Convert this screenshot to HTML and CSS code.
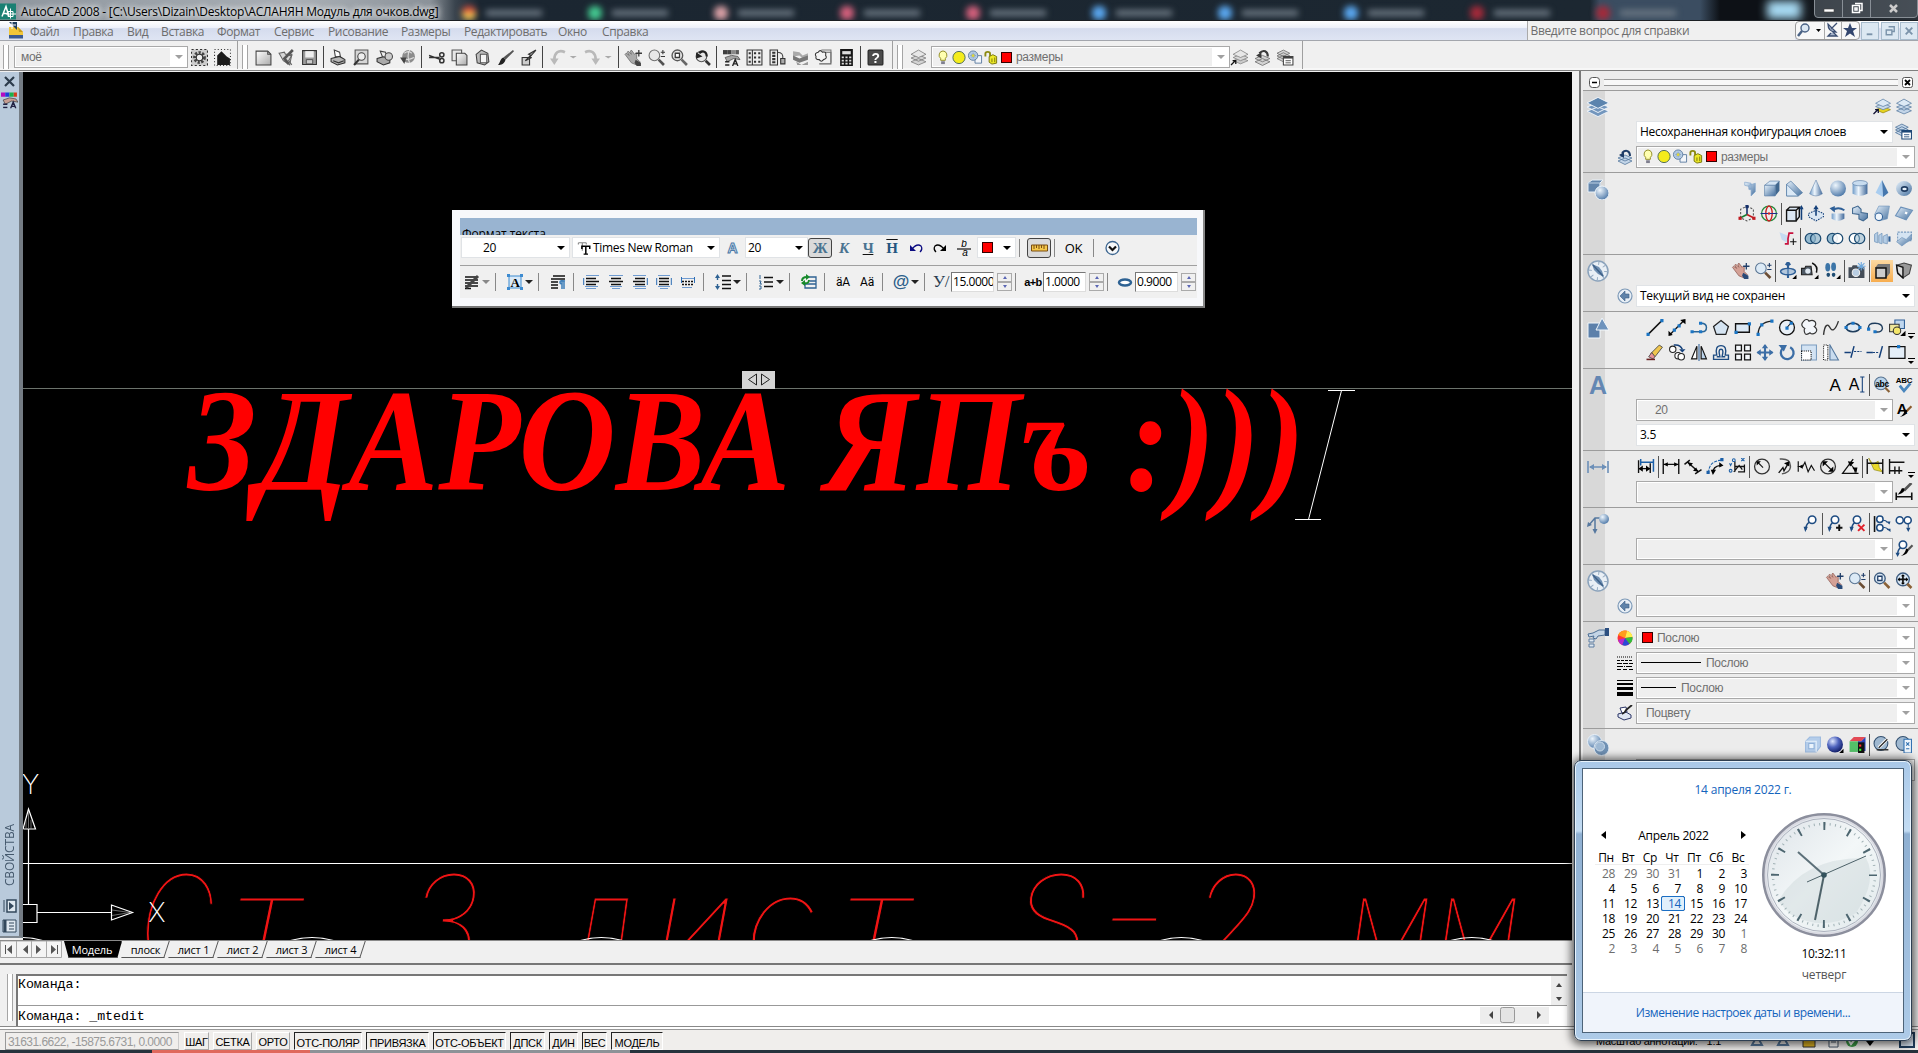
FILE: index.html
```html
<!DOCTYPE html>
<html lang="ru">
<head>
  <meta charset="UTF-8" />
  <title>AutoCAD 2008 - [C:\Users\Dizain\Desktop\АСЛАНЯН Модуль для очков.dwg]</title>
  <link rel="stylesheet" href="styles.css">
</head>
<body>
  <!-- Icon sprite -->
  <svg class="sprite" width="0" height="0">
    <defs>
      <linearGradient id="gBlue" x1="0" y1="0" x2="1" y2="1"><stop offset="0" stop-color="#e6f1fb"/><stop offset="1" stop-color="#46719f"/></linearGradient>
      <linearGradient id="gCyl" x1="0" y1="0" x2="1" y2="0"><stop offset="0" stop-color="#6f9bc8"/><stop offset=".4" stop-color="#eef6fd"/><stop offset="1" stop-color="#41699a"/></linearGradient>
      <linearGradient id="gGray" x1="0" y1="0" x2="1" y2="1"><stop offset="0" stop-color="#fff"/><stop offset="1" stop-color="#aaa"/></linearGradient>
      <radialGradient id="gBall" cx=".35" cy=".3" r=".75"><stop offset="0" stop-color="#eef6fd"/><stop offset="1" stop-color="#4d78a8"/></radialGradient>
      <radialGradient id="gBallDark" cx=".35" cy=".3" r=".75"><stop offset="0" stop-color="#dfe8ff"/><stop offset=".5" stop-color="#4e63bd"/><stop offset="1" stop-color="#101c66"/></radialGradient>
    </defs>
    <symbol id="layers" viewBox="0 0 16 16"><path d="M0 11l8-3 8 3-8 4zM0 8l8-3 8 3-8 4z" fill="#7396bd" stroke="#eef4fa" stroke-width=".7"/><path d="M0 5l8-4 8 4-8 4z" fill="#5c84ae" stroke="#eef4fa" stroke-width=".7"/></symbol>
    <symbol id="layers-cur" viewBox="0 0 16 16"><path d="M2 11l7-3 7 3-7 3z" fill="#e6d320" stroke="#8a7a10" stroke-width=".6"/><path d="M2 8l7-3 7 3-7 3z" fill="#c9d9ea" stroke="#5c80a6" stroke-width=".7"/><path d="M2 5l7-4 7 4-7 3z" fill="#dce9f5" stroke="#5c80a6" stroke-width=".7"/><path d="M0 15l4-4M1.500 11h3v3" fill="none" stroke="#113" stroke-width="1.200"/></symbol>
    <symbol id="layers-lt" viewBox="0 0 16 16"><path d="M1 12l7-3 7 3-7 3zM1 8.500l7-3 7 3-7 3z" fill="#c3d5e8" stroke="#55789e" stroke-width=".7"/><path d="M1 5l7-4 7 4-7 3z" fill="#dce9f5" stroke="#55789e" stroke-width=".7"/></symbol>
    <symbol id="layers-prev" viewBox="0 0 16 16"><path d="M1 12l7-3 7 3-7 3.500zM1 9l7-3 7 3-7 3z" fill="#c3d5e8" stroke="#55789e" stroke-width=".8"/><path d="M13 7c0-5-4-7-8-3" fill="none" stroke="#1f3d68" stroke-width="2"/><path d="M2 6l5 3 0-6z" fill="#1f3d68"/></symbol>
    <symbol id="layers-win" viewBox="0 0 16 16"><path d="M0 9l6-3 6 3-6 3zM0 6.500l6-3 6 3-6 3zM0 4l6-3 6 3-6 3z" fill="#c3d5e8" stroke="#55789e" stroke-width=".8"/><path d="M6 7h9v8H6z" fill="#fff" stroke="#1d4776"/><path d="M6 7h9v2H6z" fill="#1d4776"/><path d="M8 11h5M8 13h5" stroke="#1d4776" stroke-width=".8"/></symbol>
    <symbol id="bulb" viewBox="0 0 16 16"><path d="M8 1a4.500 4.500 0 0 1 2.500 8v2h-5V9A4.500 4.500 0 0 1 8 1z" fill="#ffffb0" stroke="#8f8b1f"/><path d="M6 12h4v3H6z" fill="#7f7f8f"/></symbol>
    <symbol id="sun" viewBox="0 0 16 16"><circle cx="8" cy="8" r="6.500" fill="#f4ec1c" stroke="#4b6a55"/></symbol>
    <symbol id="freeze" viewBox="0 0 16 16"><path d="M8 6h7v8H8z" fill="#f3f6fa" stroke="#5f7ea2"/><circle cx="6" cy="6" r="5" fill="#b5cce4" stroke="#5f7ea2"/><path d="M6 3v6M3 6h6M4 4l4 4M8 4l-4 4" stroke="#7793b4" stroke-width=".8"/><circle cx="6" cy="6" r="1.500" fill="#ded63a"/></symbol>
    <symbol id="lock" viewBox="0 0 16 16"><path d="M2 7V4q0-2 2.500-2T7 4v4" fill="none" stroke="#8c8a10" stroke-width="2"/><path d="M6 7l4-2 4 2v7l-5 1-3-2z" fill="#eeea28" stroke="#76740c"/><path d="M9 9v4M12 8v5" stroke="#76740c"/></symbol>
    <symbol id="gear" viewBox="0 0 16 16"><path d="M.5.500h15v15H.5z" fill="#ccc" stroke="#333" stroke-dasharray="2 2"/><circle cx="8" cy="8" r="4.500" fill="none" stroke="#444" stroke-width="3" stroke-dasharray="2 1.300"/><circle cx="8" cy="8" r="3" fill="#eee" stroke="#333"/></symbol>
    <symbol id="home" viewBox="0 0 16 16"><path d="M.5.500h15v15H.5z" fill="none" stroke="#333" stroke-dasharray="1 2"/><path d="M3 15V6l4-4 5 5 3 2v6z" fill="#1c1c1c"/></symbol>
    <symbol id="new" viewBox="0 0 16 16"><path d="M1 2h11l3 3v10H1z" fill="url(#gGray)" stroke="#444"/><path d="M12 2v3h3" fill="none" stroke="#444"/></symbol>
    <symbol id="open" viewBox="0 0 16 16"><path d="M1 4l5-1 1 2h6l-2 10-6-4z" fill="#d6d6d6" stroke="#666"/><path d="M14 1l-4 4-4 4 4 5" fill="none" stroke="#555" stroke-width="2.500"/><path d="M10 6l3 0-3 5 3 4" fill="none" stroke="#666"/></symbol>
    <symbol id="save" viewBox="0 0 16 16"><path d="M1.500 1.500h13v13h-13z" fill="#9b9b9b" stroke="#333"/><path d="M4 2h8v6H4z" fill="#eee"/><path d="M5 10h6v4H5z" fill="#ccc" stroke="#444" stroke-width=".8"/></symbol>
    <symbol id="print" viewBox="0 0 16 16"><path d="M4 1l5 2 1 5-5-1z" fill="#fff" stroke="#444"/><path d="M1 9l8-2 5 3v3l-7 2-6-3z" fill="#b5b5b5" stroke="#333"/><path d="M3 11l5 2 5-2" fill="none" stroke="#333"/></symbol>
    <symbol id="preview" viewBox="0 0 16 16"><path d="M2 1h12v13H2z" fill="#d6d6d6" stroke="#555"/><circle cx="8" cy="7" r="3.500" fill="#eee" stroke="#444"/><path d="M5.500 10L1 15" stroke="#333" stroke-width="2"/></symbol>
    <symbol id="publish" viewBox="0 0 16 16"><path d="M1 9l7-2 5 3v3l-6 2-6-3z" fill="#aaa" stroke="#333"/><path d="M4 2l5 1 1 5-4-1z" fill="#eee" stroke="#444"/><circle cx="12" cy="7" r="3.500" fill="#ccc" stroke="#444"/></symbol>
    <symbol id="globe" viewBox="0 0 16 16"><circle cx="9" cy="7" r="6" fill="#8c8c8c"/><path d="M5 4q4-3 7 0M4 9q5 2 10-1M10 1q-3 6 0 12" fill="none" stroke="#ddd"/><path d="M1 8l6 0-2 6z" fill="#444"/></symbol>
    <symbol id="cut" viewBox="0 0 16 16"><path d="M1 6l11 4M1 8h10" stroke="#333" stroke-width="1.400"/><circle cx="13" cy="5.500" r="2" fill="none" stroke="#333" stroke-width="1.400"/><circle cx="13" cy="11" r="2" fill="none" stroke="#333" stroke-width="1.400"/></symbol>
    <symbol id="copy" viewBox="0 0 16 16"><path d="M1 1h9v10H1z" fill="#e8e8e8" stroke="#555"/><path d="M5 4h8l2 2v9H5z" fill="url(#gGray)" stroke="#444"/></symbol>
    <symbol id="paste" viewBox="0 0 16 16"><path d="M2 5l5-4 6 3 1 8-4 3-7-2z" fill="#bdbdbd" stroke="#444"/><path d="M6 5h6v8H6z" fill="#f4f4f4" stroke="#555"/></symbol>
    <symbol id="brush" viewBox="0 0 16 16"><path d="M15 1l1 1-8 8-2-2z" fill="#555"/><path d="M6 8l2 2c-1 4-4 5-7 5 2-2 2-6 5-7z" fill="#222"/></symbol>
    <symbol id="blockedit" viewBox="0 0 16 16"><path d="M2 8h7v7H2z" fill="#ccc" stroke="#333"/><path d="M9 8L15 1l-7 4 2 1-5 5 6-3z" fill="#999" stroke="#333"/></symbol>
    <symbol id="undo" viewBox="0 0 16 16"><path d="M15 3C9 0 5 4 5 10" fill="none" stroke="currentColor" stroke-width="2.500"/><path d="M1 9h8l-4 6z" fill="currentColor"/></symbol>
    <symbol id="redo" viewBox="0 0 16 16"><path d="M1 3c6-3 10 1 10 7" fill="none" stroke="currentColor" stroke-width="2.500"/><path d="M7 9h8l-4 6z" fill="currentColor"/></symbol>
    <symbol id="pan" viewBox="0 0 16 16"><path d="M0 5l1-1 3 2-2-3 1-1 3 3-1-3 1-1 3 4 1-1 1 1v4l3 3-3 3-5-2z" fill="#d4a196" stroke="#8d5b52" stroke-width=".7"/><path d="M10 10l5 3v3h-4l-2-3z" fill="#284a78"/><path d="M13 1v6M10 4h6" stroke="#1f3d68" stroke-width="1.200"/></symbol>
    <symbol id="zoom" viewBox="0 0 16 16"><circle cx="6" cy="6" r="5" fill="#dceaf6" stroke="#5a7593"/><path d="M10 10l5 5" stroke="#6b4d34" stroke-width="2.500"/><path d="M14 1v4M12 3h4M12 7h4" stroke="#1f3d68"/></symbol>
    <symbol id="zoomwin" viewBox="0 0 16 16"><circle cx="6" cy="6" r="5" fill="#dceaf6" stroke="#3f5d80" stroke-width="1.300"/><path d="M10 10l5 5" stroke="#8a6136" stroke-width="2.500"/><path d="M4 4h4v4H4z" fill="#fff" stroke="#1f3d68" stroke-width="1.200"/></symbol>
    <symbol id="zoomext" viewBox="0 0 16 16"><circle cx="7" cy="7" r="6" fill="#dceaf6" stroke="#3f5d80" stroke-width="1.300"/><path d="M11 11l4 4" stroke="#8a6136" stroke-width="2.500"/><path d="M7 3v8M3 7h8" stroke="#111" stroke-width="1.600"/><path d="M7 2l2 2H5zM7 12l2-2H5zM2 7l2-2v4zM12 7l-2-2v4z"/></symbol>
    <symbol id="zoomprev" viewBox="0 0 16 16"><circle cx="7" cy="7" r="5" fill="#e6e6e6" stroke="#555"/><path d="M11 11l4 4" stroke="#333" stroke-width="2.500"/><path d="M12 7c0-5-4-6-7-3" fill="none" stroke="#222" stroke-width="2"/><path d="M2 3v6l6-2z" fill="#222"/></symbol>
    <symbol id="props" viewBox="0 0 16 16"><path d="M0 1h4v4H0z" fill="#b40cc0"/><path d="M4 1h4v4H4z" fill="#1d3dd8"/><path d="M8 1h4v4H8z" fill="#1bb04a"/><path d="M12 1h3v4h-3z" fill="#d43c18"/><path d="M2 8l6-2 6 1 2 3-6-1-6 3z" fill="#c79d92" stroke="#444" stroke-width=".7"/><path d="M2 12h4M2 15h4M9 16l2.500-6 2.500 6M10 14h3" fill="none" stroke="#224" stroke-width="1.300"/></symbol>
    <symbol id="dcenter" viewBox="0 0 16 16"><path d="M1 1h14v14H1z" fill="#eee" stroke="#333"/><path d="M6 1v14" stroke="#333"/><path d="M3.500 3v11M8.500 3v11M12.500 3v11" stroke="#333" stroke-width="2" stroke-dasharray="2 2"/></symbol>
    <symbol id="palette" viewBox="0 0 16 16"><path d="M1 1h7v14H1z" fill="#eee" stroke="#333"/><path d="M3 3.500h3M3 6.500h3M3 9.500h3M3 12.500h3" stroke="#333" stroke-width="2"/><path d="M8 3q6 0 5 7" fill="none" stroke="#444"/><path d="M11 9h4v5h-4z" fill="#aaa" stroke="#333"/></symbol>
    <symbol id="sheets" viewBox="0 0 16 16"><path d="M1 2l6 1 3 3 5-2v4l-5 1-3-3-6 1z" fill="#aaa"/><path d="M1 6l6 3 8-3v4l-8 3-6-3z" fill="#777"/><path d="M4 12l5 3 6-3v3H5z" fill="#999"/></symbol>
    <symbol id="markup" viewBox="0 0 16 16"><path d="M4 3h11v11H4" fill="none" stroke="#666"/><path d="M6 1h9v12" fill="none" stroke="#777"/><path d="M3 3q2-3 4 0 4-1 3 3 2 3-2 4-2 3-4 0-4 0-3-3-2-3 2-4z" fill="#f3f3f3" stroke="#333"/></symbol>
    <symbol id="calc" viewBox="0 0 16 16"><path d="M2 0h12v16H2z" fill="#151515"/><path d="M4 2h8v3H4z" fill="#ddd"/><path d="M4.500 7v8M8 7v8M11.500 7v8" stroke="#ddd" stroke-width="2" stroke-dasharray="1.700 1.300"/></symbol>
    <symbol id="help" viewBox="0 0 16 16"><rect x="1" y="1" width="14" height="14" rx="1" fill="#4b4b4b" stroke="#222"/><text x="8" y="13" text-anchor="middle" font-family="Liberation Sans" font-weight="bold" font-size="13" fill="#fff">?</text></symbol>
    <symbol id="solids" viewBox="0 0 22 22"><path d="M1 5l4-3h11l-3 3v9H1z" fill="#6486ac" stroke="#e9f1f8"/><path d="M1 5h12v9" fill="none" stroke="#bcd0e4"/><circle cx="15" cy="15" r="7" fill="url(#gBall)" stroke="#f2f7fb"/></symbol>
    <symbol id="compass" viewBox="0 0 22 22"><circle cx="11" cy="11" r="10" fill="#e9eff5" stroke="#8aa2bb" stroke-width="1.500"/><circle cx="11" cy="11" r="7.500" fill="none" stroke="#98adc3" stroke-dasharray="1 4.900" stroke-width="3"/><path d="M5 4l7 3 3 4 2 6-6-3-4-4z" fill="#6f8fb2"/><path d="M6 5l10 11" stroke="#3f6188" stroke-width="1.500"/></symbol>
    <symbol id="shapes" viewBox="0 0 22 22"><path d="M1 6h12v15H1z" fill="#5c80aa" stroke="#f2f7fb"/><path d="M15 1l7 12H9z" fill="#6e93bd" stroke="#f2f7fb"/></symbol>
    <symbol id="bigdim" viewBox="0 0 22 22"><path d="M1 5v12M21 5v12M3 11h16" stroke="#6c8fb8" stroke-width="1.600"/><path d="M2 11l5-3v6zM20 11l-5-3v6z" fill="#6c8fb8"/></symbol>
    <symbol id="bigleader" viewBox="0 0 22 22"><path d="M2 12L8 5h6M8 5v14" fill="none" stroke="#56789f" stroke-width="1.500"/><path d="M0 14l1-5 4 3zM8 21l-2.500-5h5z" fill="#56789f"/><circle cx="17" cy="6" r="5" fill="url(#gBall)"/></symbol>
    <symbol id="bigprops" viewBox="0 0 22 22"><path d="M1 7l5-1 6-3h6v5l-7 1-2 3-3-1 1-2-5 1z" fill="#c3d4e5" stroke="#4d6f95"/><path d="M18 1h4v8h-4z" fill="#2c4f80"/><path d="M2 12h5v3H2zM2 17h5v3H2z" fill="#dfe8f1" stroke="#5d7da0"/></symbol>
    <symbol id="bigballs" viewBox="0 0 22 22"><circle cx="7.500" cy="7.500" r="7" fill="url(#gBall)" stroke="#e9f1f8"/><circle cx="14.500" cy="14" r="7.500" fill="#6f90b3" stroke="#dfeaf5"/><circle cx="13" cy="12.500" r="4.500" fill="#9db8d3" stroke="#c9daea"/></symbol>
    <symbol id="polysolid" viewBox="0 0 16 16"><path d="M3 2l6 1v6l-2 0v-3l-4-1zM7 5l6-2v8l-4 4V8l-2 0z" fill="url(#gBlue)" stroke="#7fa4cb" stroke-width=".6"/></symbol>
    <symbol id="box" viewBox="0 0 16 16"><path d="M1 5l5-4h9l-4 4z" fill="#d6e6f5" stroke="#587da6" stroke-width=".6"/><path d="M11 5l4-4v9l-4 5z" fill="#41688f"/><path d="M1 5h10v10H1z" fill="url(#gBlue)" stroke="#587da6" stroke-width=".6"/></symbol>
    <symbol id="wedge" viewBox="0 0 16 16"><path d="M1 4l4-3 11 11-4 3H1z" fill="url(#gBlue)" stroke="#587da6" stroke-width=".7"/><path d="M1 4l11 11H1z" fill="#dbe9f6" stroke="#587da6" stroke-width=".7"/></symbol>
    <symbol id="cone" viewBox="0 0 16 16"><path d="M8 0l6 13q-6 4-12 0z" fill="url(#gCyl)" stroke="#587da6" stroke-width=".5"/></symbol>
    <symbol id="ball" viewBox="0 0 16 16"><circle cx="8" cy="8" r="7.500" fill="url(#gBall)"/></symbol>
    <symbol id="cylinder" viewBox="0 0 16 16"><path d="M1 3v10q7 4 14 0V3z" fill="url(#gCyl)"/><ellipse cx="8" cy="3" rx="7" ry="2.500" fill="#c8dcef" stroke="#587da6" stroke-width=".6"/></symbol>
    <symbol id="pyramid" viewBox="0 0 16 16"><path d="M8 0L2 12l7 4z" fill="#a9cdf0"/><path d="M8 0l6 12-5 4z" fill="#4678ae"/></symbol>
    <symbol id="torus" viewBox="0 0 16 16"><ellipse cx="8" cy="8" rx="7.500" ry="7" fill="url(#gBlue)"/><ellipse cx="8.500" cy="8.500" rx="2.800" ry="2" fill="#e6f1fb" stroke="#1d3a5f" stroke-width="1.500"/></symbol>
    <symbol id="orbit3d" viewBox="0 0 16 16"><path d="M8 1l6 3v8l-6 3-6-3V4z" fill="none" stroke="#555" stroke-dasharray="2 1.500"/><path d="M8 9V2" stroke="#15306b" stroke-width="1.500"/><path d="M8 9l-6 3" stroke="#168035" stroke-width="1.500"/><path d="M8 9l6 3" stroke="#c01a20" stroke-width="1.500"/><path d="M6.500 0h3v3h-3z" fill="#15306b"/><path d="M0 11h3v3H0z" fill="#c01a20"/><path d="M13 11h3v3h-3z" fill="#c01a20"/></symbol>
    <symbol id="spherewire" viewBox="0 0 16 16"><circle cx="8" cy="8" r="7" fill="none" stroke="#248a3c" stroke-width="1.200"/><ellipse cx="8" cy="8" rx="3" ry="7" fill="none" stroke="#c22" stroke-width="1.300"/><path d="M0 8h16" stroke="#1c2e8a"/><path d="M7 7h2v2H7z" fill="#c22"/></symbol>
    <symbol id="extrude" viewBox="0 0 16 16"><path d="M1 5h9v10H1zM1 5l3-3h9l-3 3M13 2v9l-3 4" fill="#dbe7f3" stroke="#111" stroke-width="1.300"/><path d="M15 14V2" stroke="#15407a" stroke-width="1.500"/><path d="M15 0l-2 4h4z" fill="#15407a"/></symbol>
    <symbol id="presspull" viewBox="0 0 16 16"><path d="M1 8l7-3 7 3v3l-7 4-7-4z" fill="#dbe7f3" stroke="#15407a" stroke-dasharray="1.500 1"/><path d="M8 10V3" stroke="#15407a" stroke-width="1.500"/><path d="M8 0l2.500 4h-5z" fill="#15407a"/></symbol>
    <symbol id="revolve" viewBox="0 0 16 16"><path d="M2 8h12v5q-6 4-12 0z" fill="url(#gCyl)"/><path d="M3 5q5-4 11 0" fill="none" stroke="#2e5f97" stroke-width="1.800"/><path d="M0 3l5-2v6z" fill="#2e5f97"/></symbol>
    <symbol id="sweep" viewBox="0 0 16 16"><path d="M1 3l5-2 3 3v3l6 1v4l-4 3-4-2V9L1 8z" fill="url(#gBlue)" stroke="#41688f"/></symbol>
    <symbol id="loft" viewBox="0 0 16 16"><path d="M1 9L5 1h10l-2 12-8 2z" fill="url(#gBlue)" stroke="#6d92ba" stroke-width=".6"/><circle cx="5" cy="11" r="3.500" fill="#f0f6fc" stroke="#2e5f97"/></symbol>
    <symbol id="planar" viewBox="0 0 16 16"><path d="M5 2l11 3-6 9-10-4z" fill="url(#gBlue)" stroke="#6d92ba"/><path d="M9 7l2 1" stroke="#fff" stroke-width="2"/></symbol>
    <symbol id="section" viewBox="0 0 16 16"><path d="M0 2l7 3v7l-5-3z" fill="#c5dbf1"/><path d="M13 3H9L8 8v5H5" fill="none" stroke="#c8103c" stroke-width="1.600"/><path d="M13 8v6M10 11h6" stroke="#111"/></symbol>
    <symbol id="union" viewBox="0 0 16 16"><circle cx="5.500" cy="8" r="4.800" fill="#94bad0" stroke="#1e4c72" stroke-width="1.200"/><circle cx="10.500" cy="8" r="4.800" fill="#94bad0" fill-opacity=".7" stroke="#1e4c72" stroke-width="1.200"/></symbol>
    <symbol id="subtract" viewBox="0 0 16 16"><circle cx="5.500" cy="8" r="4.800" fill="#94bad0" stroke="#1e4c72" stroke-width="1.200"/><circle cx="10.500" cy="8" r="4.800" fill="#fff" fill-opacity=".9" stroke="#1e4c72" stroke-width="1.200"/></symbol>
    <symbol id="intersect" viewBox="0 0 16 16"><circle cx="5.500" cy="8" r="4.800" fill="#fff" stroke="#1e4c72" stroke-width="1.200"/><circle cx="10.500" cy="8" r="4.800" fill="#94bad0" fill-opacity=".5" stroke="#1e4c72" stroke-width="1.200"/></symbol>
    <symbol id="slice" viewBox="0 0 16 16"><path d="M1 4l3-2v10l-3-1zM5 5l3-2v10l-3-1zM9 6l4-2v9l-4-1z" fill="#b4cde5" stroke="#7a9cbf" stroke-width=".8"/><path d="M15 6v5" stroke="#2e5f97" stroke-width="2"/></symbol>
    <symbol id="convert" viewBox="0 0 16 16"><path d="M2 2h13v8H2z" fill="#d5e4f2" stroke="#7a9cbf" stroke-dasharray="2 1"/><path d="M1 11l5-4 4 2 5-5v5l-5 3-4 3z" fill="url(#gBlue)" stroke="#6d92ba" stroke-width=".6"/></symbol>
    <symbol id="orbit" viewBox="0 0 16 16"><path d="M8 1v14M6 3l2-3 2 3" stroke="#2e5f97" stroke-width="2" fill="none"/><ellipse cx="8" cy="9" rx="7" ry="3" fill="#8fb1d3" fill-opacity=".6" stroke="#2e5f97" stroke-width="1.400"/><path d="M16 12v4h-4z" fill="#000"/></symbol>
    <symbol id="swivel" viewBox="0 0 16 16"><path d="M0 6h3l1-2h5l1 8H0z" fill="#4f5a66" stroke="#222"/><circle cx="6" cy="8.500" r="2.500" fill="#dfe8f1"/><path d="M10 1q6 3 4 9" fill="none" stroke="#111" stroke-width="1.500"/><path d="M16 12v4h-4z" fill="#000"/></symbol>
    <symbol id="walk" viewBox="0 0 16 16"><ellipse cx="4" cy="5" rx="2.300" ry="4" fill="#3c75a8"/><ellipse cx="9.500" cy="4.500" rx="2.300" ry="4" fill="#3c75a8"/><ellipse cx="4.500" cy="12" rx="1.700" ry="2" fill="#1e4c72"/><ellipse cx="9.500" cy="12" rx="1.700" ry="2" fill="#1e4c72"/><path d="M16 12v4h-4z" fill="#000"/></symbol>
    <symbol id="camera" viewBox="0 0 16 16"><path d="M0 5h3l1-2h4l1 2h6v10H0z" fill="#444d58"/><circle cx="7" cy="10" r="3.500" fill="#b8cde2" stroke="#eee"/><path d="M12 0v8M8 4h8M9 1l6 6M15 1L9 7" stroke="#6da8dd"/></symbol>
    <symbol id="parallel" viewBox="0 0 16 16"><path d="M4 1h12v9l-4 5V5H1z" fill="#777"/><path d="M2 5h10v10H2z" fill="#ccc" stroke="#111" stroke-width="1.500"/></symbol>
    <symbol id="persp" viewBox="0 0 16 16"><path d="M1 3l7-2 7 2-2 8-6 4-5-4z" fill="#999" stroke="#444"/><path d="M1 3l6 2v10l-5-5z" fill="#ddd" stroke="#111" stroke-width="1.300"/></symbol>
    <symbol id="back" viewBox="0 0 16 16"><circle cx="8" cy="8" r="7" fill="#e8eff6" stroke="#7e9ab8" stroke-width="1.200"/><path d="M3 8l5-5v3h4v4H8v3z" fill="#5f83aa" stroke="#3d6088" stroke-width=".6"/></symbol>
    <symbol id="line" viewBox="0 0 16 16"><path d="M2 14L14 2" stroke="#111" stroke-width="1.400"/><path d="M0 13h3v3H0zM13 0h3v3h-3z" fill="#1b75c4"/></symbol>
    <symbol id="xline" viewBox="0 0 16 16"><path d="M1 15L15 1" stroke="#111" stroke-width="1.300"/><path d="M16 0v5l-5-4zM0 16v-5l4 4z"/><path d="M4 9h3v3H4zM8.500 5h3v3h-3z" fill="#1b75c4"/></symbol>
    <symbol id="pline" viewBox="0 0 16 16"><path d="M2 12h9q4 0 4-4t-5-4" fill="none" stroke="#2b6799" stroke-width="1.400"/><path d="M0 10.500h3v3H0zM8 10.500h3v3H8zM8 2.500h3v3H8z" fill="#1b75c4"/></symbol>
    <symbol id="polygon" viewBox="0 0 16 16"><path d="M8 1.500l7 5.500-2.500 7.500h-9L1 7z" fill="#d5e4f2" stroke="#222" stroke-width="1.200"/></symbol>
    <symbol id="rect" viewBox="0 0 16 16"><path d="M1 4.500h13v8H1z" fill="#dce9f5" stroke="#111" stroke-width="1.300"/><path d="M0 11h3v3H0zM12.500 3h3v3h-3z" fill="#1b75c4"/></symbol>
    <symbol id="arc" viewBox="0 0 16 16"><path d="M1.500 14Q2 3 14 2" fill="none" stroke="#222" stroke-width="1.300"/><path d="M0 13h3v3H0zM3.500 4h3v3h-3zM13 .5h3v3h-3z" fill="#1b75c4"/></symbol>
    <symbol id="circle" viewBox="0 0 16 16"><circle cx="8" cy="8" r="7" fill="#e9f0f7" stroke="#111" stroke-width="1.200"/><path d="M8 8l3.500-4" stroke="#111"/><path d="M6.500 7h3v3h-3zM10.500 2.500h3v3h-3z" fill="#1b75c4"/></symbol>
    <symbol id="cloud" viewBox="0 0 16 16"><path d="M3 2q3-3 5 0 4-2 6 1 1 3-1 4 4 3 1 6-3 2-5 0-4 3-5 0-1-3 0-4-5-3-1-7z" fill="#f3f6fa" stroke="#333" stroke-width="1.100"/></symbol>
    <symbol id="spline" viewBox="0 0 16 16"><path d="M1 15C2 5 5 4 7 8s5 3 8-6" fill="none" stroke="#333" stroke-width="1.300"/></symbol>
    <symbol id="ellipse" viewBox="0 0 16 16"><ellipse cx="8" cy="8" rx="6.500" ry="4" fill="#dfeaf4" stroke="#1f3d5c" stroke-width="1.400"/><path d="M0 6.500h3v3H0zM13 6.500h3v3h-3zM6.500 2.500h3v3h-3z" fill="#1b75c4"/></symbol>
    <symbol id="earc" viewBox="0 0 16 16"><path d="M2 9Q1 4 8 4t7 5q-1 4-7 3" fill="none" stroke="#1f3d5c" stroke-width="1.300"/><path d="M.5 8h3v3h-3zM6.500 10.500h3v3h-3z" fill="#1b75c4"/></symbol>
    <symbol id="insblock" viewBox="0 0 16 16"><path d="M6 1h9v8H6z" fill="#bed6ee" stroke="#2e5f97"/><path d="M1 5h9v7H1z" fill="#eee79a" stroke="#333"/><circle cx="8" cy="11" r="3.500" fill="#f4e66a" stroke="#333"/><path d="M16 11v5h-5z" fill="#000"/></symbol>
    <symbol id="erase" viewBox="0 0 16 16"><path d="M4 9l8-8 3 2-7 9z" fill="#f0c64e" stroke="#444" stroke-width=".8"/><path d="M2 12l3-4 3 4-2 2z" fill="#e8929a" stroke="#444" stroke-width=".8"/><path d="M0 14.500h8" stroke="#6b2020" stroke-width="1.500"/></symbol>
    <symbol id="copyobj" viewBox="0 0 16 16"><circle cx="4" cy="5" r="3" fill="#fff" stroke="#222"/><circle cx="9" cy="11" r="3" fill="#fff" stroke="#222"/><circle cx="12" cy="12" r="3" fill="#fff" stroke="#222"/><path d="M5 1q6-1 8 4" fill="none" stroke="#15407a" stroke-width="1.400"/><path d="M10 5h6l-3 3z" fill="#15407a"/></symbol>
    <symbol id="mirror" viewBox="0 0 16 16"><path d="M6 2v12H1z" fill="#fff" stroke="#111" stroke-width="1.100"/><path d="M10 2v12h5z" fill="#bcd3ea" stroke="#111" stroke-width="1.100"/><path d="M8 0v16" stroke="#2e5f97"/></symbol>
    <symbol id="offset" viewBox="0 0 16 16"><path d="M1 14.500v-4h3q-2-9 4-9t4 9h3v4zM4 12h3q-2-7 1-7t1 7h3" fill="none" stroke="#1e4c82" stroke-width="1.300"/></symbol>
    <symbol id="array" viewBox="0 0 16 16"><path d="M1 1h5.500v5.500H1zM9.500 1H15v5.500H9.500zM1 9.500h5.500V15H1zM9.500 9.500H15V15H9.500z" fill="#f4f7fa" stroke="#111" stroke-width="1.200"/></symbol>
    <symbol id="move" viewBox="0 0 16 16"><path d="M8 1v14M1 8h14" stroke="#3c6ea6" stroke-width="2"/><path d="M8 0l3 4H5zM8 16l3-4H5zM0 8l4-3v6zM16 8l-4-3v6z" fill="#3c6ea6"/></symbol>
    <symbol id="rotate" viewBox="0 0 16 16"><path d="M4 4a6 6 0 1 0 7-1" fill="none" stroke="#3c6ea6" stroke-width="2.200"/><path d="M0 1h8L5 7z" fill="#3c6ea6"/></symbol>
    <symbol id="scale" viewBox="0 0 16 16"><path d="M1 1h14v14H1z" fill="#d3e3f3" stroke="#7a9cbf"/><path d="M1 6.500h9V15H1z" fill="#fff" stroke="#111" stroke-dasharray="1 1"/></symbol>
    <symbol id="stretch" viewBox="0 0 16 16"><path d="M1 1h4v14H1z" fill="#fff" stroke="#111" stroke-dasharray="1 1"/><path d="M7 1l8 14H7z" fill="#c9dcef" stroke="#55789e"/></symbol>
    <symbol id="trim" viewBox="0 0 16 16"><path d="M0 8h6M6 13l3-11" stroke="#15407a" stroke-width="1.400"/><path d="M9 7h7" stroke="#15407a" stroke-dasharray="2 1"/></symbol>
    <symbol id="extend" viewBox="0 0 16 16"><path d="M0 8h6M12 13l3-11" stroke="#15407a" stroke-width="1.400"/><path d="M6 8h6" stroke="#15407a" stroke-dasharray="2 1"/></symbol>
    <symbol id="break" viewBox="0 0 16 16"><path d="M.5 2.500h15v11H.5z" fill="#e4eef8" stroke="#111" stroke-width="1.200"/><path d="M8 1h3v3H8z" fill="#1b75c4"/></symbol>
    <symbol id="textA" viewBox="0 0 16 16"><text x="8" y="14" text-anchor="middle" font-family="Liberation Sans" font-size="16">A</text></symbol>
    <symbol id="mtext" viewBox="0 0 16 16"><text x="5" y="13" text-anchor="middle" font-family="Liberation Sans" font-size="15">A</text><path d="M11 1h4M13 1v14M11 15h4" stroke="#15407a"/></symbol>
    <symbol id="find" viewBox="0 0 16 16"><circle cx="7" cy="7" r="6" fill="#b9d3ea" stroke="#5a7593"/><path d="M11 11l4 4" stroke="#8a6136" stroke-width="2"/><text x="8" y="10" text-anchor="middle" font-family="Liberation Sans" font-weight="bold" font-size="8">abc</text></symbol>
    <symbol id="spell" viewBox="0 0 16 16"><text x="8" y="7" text-anchor="middle" font-family="Liberation Sans" font-weight="bold" font-size="7.500">ABC</text><path d="M4 9l4 5 6-7" fill="none" stroke="#4a87bd" stroke-width="2.600"/></symbol>
    <symbol id="style" viewBox="0 0 16 16"><text x="6" y="12" text-anchor="middle" font-family="Liberation Sans" font-weight="bold" font-size="14">A</text><path d="M15 5l-5 5" stroke="#8a5a2b" stroke-width="2"/><path d="M11 9q0 5-7 6 4-2 5-7z"/></symbol>
    <symbol id="qdim" viewBox="0 0 16 16"><path d="M1 2v12M12 5v9M1 10h11" stroke="#111" stroke-width="1.300"/><path d="M3 1v6M15 1v12M3 4h12" fill="none" stroke="#1b5fa8" stroke-width="1.400"/><path d="M1 10l4-3v6zM12 10l-4-3v6z"/></symbol>
    <symbol id="dimlin" viewBox="0 0 16 16"><path d="M.7 1v14M15.300 1v14M1 6h14" stroke="#111" stroke-width="1.300"/><path d="M1 6l4-2v4zM15 6l-4-2v4z"/></symbol>
    <symbol id="dimal" viewBox="0 0 16 16"><path d="M0 6l5-4M10 15l6-4M3 4l10 9" stroke="#111" stroke-width="1.400"/><path d="M3 4l5 1-3 3zM13 13l-5-1 3-3z"/></symbol>
    <symbol id="dimarc" viewBox="0 0 16 16"><path d="M2 14Q2 3 14 2" fill="none" stroke="#1b5fa8" stroke-dasharray="3 1"/><path d="M6 14q0-6 7-7" fill="none" stroke="#111" stroke-width="1.300"/><path d="M16 7l-4-3v5zM6 16l-2-5h5z"/><path d="M13 0h3v3h-3zM0 12h3v3H0z" fill="#1b5fa8"/></symbol>
    <symbol id="dimord" viewBox="0 0 16 16"><path d="M6 3v10M6 8h9M9 13h6V6M5 13l5-6 3 4" fill="none" stroke="#111" stroke-width="1.200"/><circle cx="5" cy="2" r="1.300" fill="none" stroke="#1b5fa8"/><circle cx="2" cy="12" r="1.300" fill="none" stroke="#1b5fa8"/><path d="M12 0l3 3M15 0l-3 3M1 5l1 2 1-2" fill="none" stroke="#1b5fa8"/></symbol>
    <symbol id="dimrad" viewBox="0 0 16 16"><circle cx="8" cy="8" r="7" fill="none" stroke="#333" stroke-width="1.200"/><path d="M9 9L4 4" stroke="#111"/><path d="M3 3h4L3 7z"/></symbol>
    <symbol id="dimjog" viewBox="0 0 16 16"><path d="M4 1q11-1 10 8-1 5-8 6" fill="none" stroke="#555" stroke-width="1.300"/><path d="M3 14l4-5 1 3 4-7" fill="none" stroke="#111" stroke-width="1.300"/><path d="M13 3v5L8 5z"/></symbol>
    <symbol id="dimjogl" viewBox="0 0 16 16"><path d="M.7 3v10M0 8h5l2-4 3 9 3-6 3 5" fill="none" stroke="#111" stroke-width="1.100"/><path d="M1 8l4-2v4z"/></symbol>
    <symbol id="dimdia" viewBox="0 0 16 16"><circle cx="8" cy="8" r="7" fill="none" stroke="#333" stroke-width="1.200"/><path d="M4 4l8 8" stroke="#111"/><path d="M3 3h5L3 8zM13 13H8l5-5z"/></symbol>
    <symbol id="dimang" viewBox="0 0 16 16"><path d="M16 14.500H1L11 1" fill="none" stroke="#111" stroke-width="1.200"/><path d="M8 6q4 2 5 8" fill="none" stroke="#111"/><path d="M6 3l6 1-4 4zM10 9h5l-1 5z"/></symbol>
    <symbol id="qdim2" viewBox="0 0 16 16"><path d="M2 0l4 6 5-3 1 6 3 4-8-2z" fill="#e9d92a" stroke="#8c8412" stroke-width=".6"/><path d="M.7 1v14M15.300 1v14M1 5h14" stroke="#111" stroke-width="1.300"/></symbol>
    <symbol id="dimcont" viewBox="0 0 16 16"><path d="M1 1v14M1 4h14M6 8v7M1 12h12M10 8v7" stroke="#111" stroke-width="1.300"/></symbol>
    <symbol id="dimstyle" viewBox="0 0 16 16"><path d="M.7 9v7M15.300 9v7M1 13h14" stroke="#111" stroke-width="1.500"/><path d="M15 0L8 7" stroke="#555" stroke-width="2.500"/><path d="M8 5q2 4-6 6 3-3 4-6z"/></symbol>
    <symbol id="leader" viewBox="0 0 16 16"><circle cx="10" cy="4.500" r="3.500" fill="#fff" stroke="#1e4c82" stroke-width="1.500"/><path d="M7 7q-3 2-3 7" fill="none" stroke="#1e4c82" stroke-width="1.400"/><path d="M3.500 16L2 11h4z" fill="#1e4c82"/></symbol>
    <symbol id="leadadd" viewBox="0 0 16 16"><circle cx="8" cy="4.500" r="3.500" fill="#fff" stroke="#1e4c82" stroke-width="1.500"/><path d="M6 7q-3 2-3 7" fill="none" stroke="#1e4c82" stroke-width="1.400"/><path d="M2.500 16L1 11h4z" fill="#1e4c82"/><path d="M12 9v6M9 12h6" stroke="#111" stroke-width="1.800"/></symbol>
    <symbol id="leaddel" viewBox="0 0 16 16"><circle cx="8" cy="4.500" r="3.500" fill="#fff" stroke="#1e4c82" stroke-width="1.500"/><path d="M6 7q-3 2-3 7" fill="none" stroke="#1e4c82" stroke-width="1.400"/><path d="M2.500 16L1 11h4z" fill="#1e4c82"/><path d="M9 9l6 6M15 9l-6 6" stroke="#e0202a" stroke-width="1.800"/></symbol>
    <symbol id="leadalign" viewBox="0 0 16 16"><path d="M1 1v15" stroke="#111" stroke-width="1.500"/><circle cx="6" cy="4" r="3" fill="#fff" stroke="#1e4c82" stroke-width="1.400"/><circle cx="6" cy="12" r="3" fill="#fff" stroke="#1e4c82" stroke-width="1.400"/><path d="M9 5q3 0 4 2M9 12q3-1 5 2" fill="none" stroke="#1e4c82"/><path d="M12 6l4 0-1 3zM12 13h4v3z" fill="#1e4c82"/></symbol>
    <symbol id="leadcol" viewBox="0 0 16 16"><circle cx="4" cy="5" r="3.300" fill="#fff" stroke="#1e4c82" stroke-width="1.500"/><circle cx="11.500" cy="5" r="3.300" fill="#fff" stroke="#1e4c82" stroke-width="1.500"/><path d="M12 8v4" stroke="#1e4c82"/><path d="M12 16l-2-4h4z" fill="#1e4c82"/></symbol>
    <symbol id="leadstyle" viewBox="0 0 16 16"><circle cx="7" cy="4.500" r="3.500" fill="#fff" stroke="#1e4c82" stroke-width="1.500"/><path d="M5 7q-3 2-3 7" fill="none" stroke="#1e4c82" stroke-width="1.400"/><path d="M2 16l-2-4h4z" fill="#1e4c82"/><path d="M16 5l-5 5" stroke="#555" stroke-width="2"/><path d="M12 9q0 5-7 6 4-2 5-7z"/></symbol>
    <symbol id="wheel" viewBox="0 0 16 16"><circle cx="8" cy="8" r="7.500" fill="#f33"/><path d="M8 8L1 5A7.500 7.500 0 0 1 10 .7z" fill="#ff9d1c"/><path d="M8 8l2-7.300a7.500 7.500 0 0 1 5.500 6.300z" fill="#fff04a"/><path d="M8 8l7.500-1a7.500 7.500 0 0 1-3 7z" fill="#2fbf3b"/><path d="M8 8l4.500 6A7.500 7.500 0 0 1 5 15z" fill="#2a49d8"/><path d="M8 8l-3 7a7.500 7.500 0 0 1-4-5z" fill="#b42bd0"/></symbol>
    <symbol id="ltype" viewBox="0 0 16 16"><path d="M0 2h16" stroke="#000" stroke-dasharray="1 1" stroke-width="1.200"/><path d="M0 5.500h16" stroke="#000" stroke-dasharray="3 1"/><path d="M0 8.500h16" stroke="#000" stroke-dasharray="5 1"/><path d="M0 11.500h16" stroke="#000" stroke-dasharray="6 1 1 1"/><path d="M0 14.500h16" stroke="#000" stroke-dasharray="4 2"/></symbol>
    <symbol id="lweight" viewBox="0 0 16 16"><path d="M0 0h16v1H0zM0 3h16v2H0zM0 7h16v3H0zM0 12h16v4H0z"/></symbol>
    <symbol id="pstyle" viewBox="0 0 16 16"><path d="M1 9l8-2 5 3v3l-7 2-6-3z" fill="#dfe6f2" stroke="#2b3566"/><path d="M3 3l6-1 1 5-5 1z" fill="#fff" stroke="#2b3566"/><path d="M15 0l-6 5q-1 3-4 4" fill="none" stroke="#222" stroke-width="1.800"/></symbol>
    <symbol id="glass" viewBox="0 0 16 16"><path d="M1 5l4-4h10v9l-4 5H1z" fill="#b4cdea" stroke="#9dbbe0"/><path d="M1 5h10v10" fill="none" stroke="#e8f2fc"/><path d="M4 7h5v5H4z" fill="#eaf3fc" stroke="#8fb0d8"/></symbol>
    <symbol id="darkball" viewBox="0 0 16 16"><circle cx="8" cy="8" r="7.500" fill="url(#gBallDark)"/><path d="M16 12v4h-4z" fill="#000"/></symbol>
    <symbol id="rgbbox" viewBox="0 0 16 16"><path d="M1 5l4-4h11l-4 4z" fill="#e34a55"/><path d="M1 5h9v10H1z" fill="#54c069"/><path d="M12 5l4-4v13H9V5z" fill="#2a3fb5"/><path d="M9 6h6v10H9z" fill="#111"/><path d="M10 8h2v2h-2z" fill="#f33"/><path d="M10 12h2v2h-2z" fill="#3f3"/></symbol>
    <symbol id="balltool" viewBox="0 0 16 16"><circle cx="7" cy="7" r="6.500" fill="#9fb8d0" stroke="#33506f"/><path d="M5 11l8-8" stroke="#fff" stroke-width="3"/><path d="M5 11l8-8M3 13h11" stroke="#333" stroke-width="1.400"/></symbol>
    <symbol id="ballsheet" viewBox="0 0 16 16"><circle cx="7" cy="7" r="6.500" fill="#9fb8d0" stroke="#33506f"/><path d="M8 3h7v13H8z" fill="#eef5fc" stroke="#2e6fb0"/><path d="M10 6l3 3M13 6l-3 3M10 12h3" stroke="#2e6fb0"/></symbol>
    <!-- text editor icons -->
    <symbol id="j-left" viewBox="0 0 16 16"><path d="M3 1.500h13M3 14.500h10M2 12.500h13" stroke="#6f9bd0"/><path d="M3 4.500h10M3 7.500h13M3 10.500h10" stroke="#111" stroke-width="1.500"/><path d="M.7 4v7" stroke="#2c6db5"/></symbol>
    <symbol id="j-center" viewBox="0 0 16 16"><path d="M1 1.500h14M2 12.500h12M4 14.500h8" stroke="#6f9bd0"/><path d="M3 4.500h10M1 7.500h14M3 10.500h10" stroke="#111" stroke-width="1.500"/></symbol>
    <symbol id="j-right" viewBox="0 0 16 16"><path d="M1 1.500h13M1 12.500h13M3 14.500h11" stroke="#6f9bd0"/><path d="M3 4.500h10M1 7.500h12M3 10.500h10" stroke="#111" stroke-width="1.500"/><path d="M15.300 4v7" stroke="#2c6db5"/></symbol>
    <symbol id="j-just" viewBox="0 0 16 16"><path d="M2 1.500h12M2 12.500h12M4 14.500h8" stroke="#6f9bd0"/><path d="M3 4.500h10M3 7.500h10M3 10.500h10" stroke="#111" stroke-width="1.500"/><path d="M.7 4v7M15.300 4v7" stroke="#2c6db5"/></symbol>
    <symbol id="j-dist" viewBox="0 0 16 16"><path d="M2 4.500h12M2 13.500h10" stroke="#6f9bd0"/><path d="M2 7.500h12M2 10.500h12" stroke="#111" stroke-width="1.300" stroke-dasharray="2 1"/><path d="M1.500 3v6M14.500 3v6" stroke="#2c6db5"/></symbol>
    <symbol id="columns" viewBox="0 0 16 16"><path d="M1 3h13M1 6h13M1 9h13M1 12h13M1 14.500h6" stroke="#111" stroke-width="1.600"/><path d="M14 2L2 14" stroke="#444" stroke-width="3"/></symbol>
    <symbol id="mjust" viewBox="0 0 16 16"><path d="M2 2h12v12H2z" fill="#d9e9f8" stroke="#3d8bd0"/><path d="M0 0h3v3H0zM13 0h3v3h-3zM0 13h3v3H0zM13 13h3v3h-3z" fill="#3d8bd0"/><text x="8" y="12.500" text-anchor="middle" font-family="Liberation Serif" font-weight="bold" font-size="13">A</text></symbol>
    <symbol id="para" viewBox="0 0 16 16"><path d="M3 2h12M1 5h14M1 8h7M1 11h7M1 14h7" stroke="#111" stroke-width="1.500"/><path d="M12 7v8M14 7v8M10 8q0-2 5-1M10 8q0 2 2 2" fill="none" stroke="#3d7eb8" stroke-width="1.500"/></symbol>
    <symbol id="spacing" viewBox="0 0 16 16"><path d="M7 2h9M7 6.500h9M7 10.500h9M7 14.500h9" stroke="#111" stroke-width="1.300"/><path d="M2.500 2v4M2.500 10v4" stroke="#2e6293" stroke-width="1.400"/><path d="M2.500 0l2.500 4H0zM2.500 16L5 12H0z" fill="#2e6293"/></symbol>
    <symbol id="numlist" viewBox="0 0 16 16"><path d="M6 3.500h9M6 8h9M6 12.500h9" stroke="#111" stroke-width="1.400"/><path d="M2 1v4M1 7h2l-1 3h2M1 12h2v3H1" fill="none" stroke="#2e6293"/></symbol>
    <symbol id="field" viewBox="0 0 16 16"><path d="M8 3h7v11H4v-4h11M9 7h6" fill="none" stroke="#2e6293" stroke-width="1.300"/><path d="M1 7q0-4 5-4M8 6q0 4-5 3" fill="none" stroke="#188a2c" stroke-width="2"/><path d="M5 0l4 3-4 3zM4 6v6L0 9z" fill="#188a2c"/></symbol>
    <symbol id="ruler" viewBox="0 0 16 16"><path d="M0 5h16v6H0z" fill="#f5c84a" stroke="#7a4d10"/><path d="M2.500 5v4M5 5v3M7.500 5v4M10 5v3M12.500 5v4" stroke="#7a4d10"/></symbol>
    <symbol id="options" viewBox="0 0 16 16"><circle cx="8" cy="8" r="6.500" fill="#f6f8fa" stroke="#3d6690" stroke-width="1.300"/><path d="M4.500 6.500L8 10l3.500-3.500" fill="none" stroke="#111" stroke-width="2.200"/></symbol>
    <symbol id="stack" viewBox="0 0 16 16"><path d="M1 9h14" stroke="#111" stroke-width="1.200"/><text x="8" y="7" text-anchor="middle" font-family="Liberation Sans" font-style="italic" font-size="10">b</text><text x="9" y="16" text-anchor="middle" font-family="Liberation Sans" font-style="italic" font-size="10">a</text></symbol>
    <symbol id="curl-l" viewBox="0 0 16 16"><path d="M12 12q3-3 1-6-4-3-9 3" fill="none" stroke="currentColor" stroke-width="1.300"/><path d="M2 5v6h6z" fill="currentColor"/></symbol>
    <symbol id="curl-r" viewBox="0 0 16 16"><path d="M4 12q-3-3-1-6 4-3 9 3" fill="none" stroke="currentColor" stroke-width="1.300"/><path d="M14 5v6H8z" fill="currentColor"/></symbol>
    <symbol id="oval" viewBox="0 0 16 16"><ellipse cx="8" cy="8.500" rx="6" ry="3" fill="#fff" stroke="#2e6293" stroke-width="2.500"/></symbol>
    <symbol id="tt" viewBox="0 0 16 16"><path d="M1 2h9M1 2v2M10 2v2M5.500 2v9" fill="none" stroke="#888" stroke-width="1.300"/><path d="M5 6h9M5 5v4M14 5v4M9.500 6v9M7 15h5" fill="none" stroke="#000" stroke-width="1.700"/></symbol>
  </svg>

  <div class="app">
    <div class="titlebar">
      <svg class="app-icon" viewBox="0 0 16 16"><rect width="16" height="16" fill="#1a8073"/><path d="M2 13L6 3l3 10M3 10h5" fill="none" stroke="#fff" stroke-width="1.500"/><path d="M8 8h5v5H8zM10.500 5v10M6 10.500h10" fill="none" stroke="#fff"/></svg>
      <span class="title">AutoCAD 2008 - [C:\Users\Dizain\Desktop\АСЛАНЯН Модуль для очков.dwg]</span>
      <div class="glass-tabs">
        <i class="yellow"></i><i class="green"></i><i class="rose"></i><i class="pink"></i><i class="pink"></i><i></i><i></i><i></i><i class="red"></i><i class="red"></i>
      </div>
      <div class="glass-glow"></div>
      <div class="win-buttons">
        <span><svg width="14" height="14"><rect x="2" y="8" width="10" height="3" fill="#fff" stroke="#444" stroke-width=".6"/></svg></span>
        <span><svg width="14" height="14"><path d="M5 2.500h7v7h-2M2.500 4.500h7v7h-7zM5 7h2v2H5z" fill="none" stroke="#fff" stroke-width="1.500"/></svg></span>
        <span><svg width="14" height="14"><path d="M3 4l7 7M10 4l-7 7" stroke="#ccc" stroke-width="2.500"/></svg></span>
      </div>
    </div>

    <div class="menubar">
      <svg class="doc-icon" viewBox="0 0 16 17"><path d="M1 5h9l5 5v6H1z" fill="#f2c638"/><path d="M1 13l14 0v3.500H1z" fill="#3a5a92"/><path d="M10 5l5 5h-4z" fill="#c59a1c"/><path d="M1 0h8v8z" fill="#22405e"/><path d="M4 0v7M1 3h7" stroke="#fff"/></svg>
      <span style="width:43px">Файл</span><span style="width:54px">Правка</span><span style="width:34px">Вид</span><span style="width:56px">Вставка</span><span style="width:57px">Формат</span><span style="width:54px">Сервис</span><span style="width:73px">Рисование</span><span style="width:63px">Размеры</span><span style="width:94px">Редактировать</span><span style="width:44px">Окно</span><span>Справка</span>
      <div class="infocenter">
        <div class="ask">Введите вопрос для справки</div>
        <div class="info-buttons">
          <span class="wide"><svg width="26" height="16"><circle cx="9" cy="6" r="4" fill="#dbe7f3" stroke="#4a6285" stroke-width="1.400"/><path d="M6 9l-4 5" stroke="#4a6285" stroke-width="2.500"/><path d="M20 7h5l-2.500 3z"/></svg></span>
          <span><svg width="15" height="16"><path d="M3 2q0 8 8 8zM6 11l-3 3h9l-4-4M12 1L6 7" fill="#a7b5cb" stroke="#3c4f73" stroke-width="1.300"/></svg></span>
          <span><svg width="16" height="16"><path d="M8 1l2 5h5l-4 3 2 6-5-3.500L3 15l2-6-4-3h5z" fill="#33466e"/></svg></span>
        </div>
        <div class="mdi"><svg viewBox="0 0 17 17"><path d="M5 12h6" stroke="#7b93aa" stroke-width="2"/></svg></div>
        <div class="mdi"><svg viewBox="0 0 17 17"><path d="M7 4h6v5h-2M4.500 7.500h6v5h-6z" fill="none" stroke="#7b93aa" stroke-width="1.500"/></svg></div>
        <div class="mdi"><svg viewBox="0 0 17 17"><path d="M5 5l7 7M12 5l-7 7" stroke="#7b93aa" stroke-width="2"/></svg></div>
      </div>
    </div>

    <div class="toolbars">
      <div class="toolbar workspace">
        <b class="grip"></b>
        <div class="combo off">моё<u></u></div>
        <svg><use href="#gear"/></svg><svg><use href="#home"/></svg>
      </div>
      <div class="toolbar standard">
        <b class="grip"></b>
        <svg><use href="#new"/></svg><svg><use href="#open"/></svg><svg><use href="#save"/></svg><hr>
        <svg><use href="#print"/></svg><svg><use href="#preview"/></svg><svg><use href="#publish"/></svg><svg><use href="#globe"/></svg><hr>
        <svg><use href="#cut"/></svg><svg><use href="#copy"/></svg><svg><use href="#paste"/></svg><svg><use href="#brush"/></svg><svg><use href="#blockedit"/></svg><hr>
        <svg class="dim"><use href="#undo"/></svg><em></em><svg class="dim"><use href="#redo"/></svg><em></em><hr>
        <svg><use href="#pan"/></svg><svg><use href="#zoom"/></svg><svg><use href="#zoomwin"/></svg><svg><use href="#zoomprev"/></svg><hr>
        <svg><use href="#props"/></svg><svg><use href="#dcenter"/></svg><svg><use href="#palette"/></svg><svg><use href="#sheets"/></svg><svg><use href="#markup"/></svg><svg><use href="#calc"/></svg><hr>
        <svg><use href="#help"/></svg>
      </div>
      <div class="toolbar layer-bar">
        <b class="grip"></b>
        <svg><use href="#layers-lt"/></svg>
        <div class="combo off layer-combo"><svg><use href="#bulb"/></svg><svg><use href="#sun"/></svg><svg><use href="#freeze"/></svg><svg><use href="#lock"/></svg><s></s>размеры<u></u></div>
        <svg><use href="#layers-cur"/></svg><svg><use href="#layers-prev"/></svg><svg><use href="#layers-win"/></svg>
      </div>
    </div>

    <div class="workarea">
      <div class="left">
        <div class="main-row">
          <div class="side-palette">
            <svg width="13" height="13"><path d="M2 2l9 9M11 2l-9 9" stroke="#2c3c4c" stroke-width="2.200"/></svg>
            <svg width="17" height="18" viewBox="0 0 16 16"><use href="#props"/></svg>
            <div class="side-label">СВОЙСТВА</div>
            <svg width="15" height="14"><path d="M2 1v12" stroke="#33485c"/><path d="M5 1h9v12H5z" fill="#dfe8f0" stroke="#33485c" stroke-width="1.500"/><path d="M7 3l5 4-5 4z" fill="#33485c"/></svg>
            <svg width="15" height="14"><path d="M1 1h13v12H1z" fill="#dfe8f0" stroke="#33485c"/><path d="M3 1v12" stroke="#33485c" stroke-width="3"/><path d="M7 4h5M7 7h5M7 10h5" stroke="#33485c"/></svg>
          </div>
          <!-- Drawing area, coordinates are screen pixels -->
          <svg class="canvas" viewBox="23 72 1549 868" width="1549" height="868">
            <path d="M23 388.500H1572" stroke="#6c736c"/>
            <path d="M742 371h33v18h-33z" fill="#d4d4d4"/>
            <path d="M756.500 374v11l-8-5.500zM761.500 374v11l8-5.500z" fill="none" stroke="#222"/>
            <text class="mtext" x="188" y="490" textLength="1117" lengthAdjust="spacingAndGlyphs">ЗДАРОВА ЯПъ :)))</text>
            <path d="M1328 390.500h27M1341.500 390.500L1308.500 519.500M1295 519.500h26" fill="none" stroke="#fff"/>
            <path d="M23 863.500H1572" stroke="#fff"/>
            <g class="cadtext">
              <text x="138" y="970" textLength="78" lengthAdjust="spacingAndGlyphs">С</text>
              <text x="232" y="970" textLength="66" lengthAdjust="spacingAndGlyphs">т</text>
              <text x="405" y="970" textLength="76" lengthAdjust="spacingAndGlyphs">3</text>
              <text x="574" y="970" textLength="60" lengthAdjust="spacingAndGlyphs">л</text>
              <text x="652" y="970" textLength="84" lengthAdjust="spacingAndGlyphs">и</text>
              <text x="744" y="970" textLength="74" lengthAdjust="spacingAndGlyphs">с</text>
              <text x="842" y="970" textLength="66" lengthAdjust="spacingAndGlyphs">т</text>
              <text x="1012" y="970" textLength="78" lengthAdjust="spacingAndGlyphs">S</text>
              <text x="1090" y="970" textLength="84" lengthAdjust="spacingAndGlyphs">=</text>
              <text x="1190" y="970" textLength="76" lengthAdjust="spacingAndGlyphs">2</text>
              <text x="1346" y="970" textLength="88" lengthAdjust="spacingAndGlyphs">м</text>
              <text x="1434" y="970" textLength="88" lengthAdjust="spacingAndGlyphs">м</text>
            </g>
            <g fill="none" stroke="#fff" stroke-width="1.200">
              <path d="M0 941q22-7 44 0M289 941q23-7 46 0M579 941q22-7 45 0M869 941q23-7 45 0M1159 941q22-7 45 0M1449 941q23-7 45 0"/>
              <path d="M28.500 904V829M23.500 829h12l-7-20-5.500 20M23 904.500h14v18H23M37 912.500h74M111.500 905v15l21-7.500z"/>
              <path d="M28.500 812v16M31 820v9M26 820v9M112 910l18 2.500M112 915.500l18-3" stroke="#999" stroke-width=".7"/>
            </g>
            <text class="axis" x="157" y="922">X</text>
            <text class="axis" x="30.500" y="794">Y</text>
          </svg>
        </div>

        <div class="tabs">
          <svg width="62" height="17"><path d="M.5 0h61v16.500H.5zM16.500 0v17M31.500 0v17M46.500 0v17" fill="#f4f4f4" stroke="#a9a9a9"/><path d="M12 4v9L7 8.500zM28 4v9l-5-4.500zM36 4v9l5-4.500zM51 4v9l5-4.500z" fill="#555"/><path d="M5.500 4v9M57.500 4v9" stroke="#555"/></svg>
          <span class="tab on">Модель</span><span class="tab first">плоск</span><span class="tab">лист 1</span><span class="tab">лист 2</span><span class="tab">лист 3</span><span class="tab">лист 4</span>
        </div>

        <div class="command">
          <b class="grip"></b>
          <div class="cmd-box">
            <div class="cmd-history"><span>Команда:</span>
              <div class="vscroll"><svg width="15" height="30"><path d="M8 7l3 4H5zM8 25l3-4H5z" fill="#444"/></svg></div>
            </div>
            <div class="cmd-line"><span>Команда: _mtedit</span>
              <div class="hscroll"><svg width="68" height="17"><path d="M9 8l4-4v8zM61 8l-4-4v8z" fill="#444"/><rect x="20.500" y=".5" width="14" height="15" rx="2" fill="#e4e4e4" stroke="#999"/></svg></div>
            </div>
          </div>
        </div>
      </div>

      <!-- Dashboard -->
      <div class="dashboard">
        <div class="dash-head">
          <svg width="11" height="11"><rect x=".5" y=".5" width="10" height="10" rx="3" fill="#fff" stroke="#555"/><path d="M3 5.500h5" stroke="#000" stroke-width="1.500"/></svg>
          <b></b>
          <svg width="11" height="11"><rect x=".5" y=".5" width="10" height="10" rx="2" fill="#fff" stroke="#555"/><path d="M3 3l5 5M8 3l-5 5" stroke="#000" stroke-width="1.800"/></svg>
        </div>

        <div class="sect">
          <svg class="big"><use href="#layers"/></svg>
          <div class="row"><svg><use href="#layers-cur"/></svg><svg><use href="#layers-lt"/></svg></div>
          <div class="row"><div class="combo">Несохраненная конфигурация слоев<u></u></div><svg><use href="#layers-win"/></svg></div>
          <div class="row"><svg class="lead"><use href="#layers-prev"/></svg><div class="combo off layer-combo"><svg><use href="#bulb"/></svg><svg><use href="#sun"/></svg><svg><use href="#freeze"/></svg><svg><use href="#lock"/></svg><s></s>размеры<u></u></div></div>
        </div>

        <div class="sect">
          <svg class="big"><use href="#solids"/></svg>
          <div class="row"><svg><use href="#polysolid"/></svg><svg><use href="#box"/></svg><svg><use href="#wedge"/></svg><svg><use href="#cone"/></svg><svg><use href="#ball"/></svg><svg><use href="#cylinder"/></svg><svg><use href="#pyramid"/></svg><svg><use href="#torus"/></svg></div>
          <div class="row"><svg><use href="#orbit3d"/></svg><svg><use href="#spherewire"/></svg><hr><svg><use href="#extrude"/></svg><svg><use href="#presspull"/></svg><svg><use href="#revolve"/></svg><svg><use href="#sweep"/></svg><svg><use href="#loft"/></svg><svg><use href="#planar"/></svg></div>
          <div class="row"><svg><use href="#section"/></svg><hr><svg><use href="#union"/></svg><svg><use href="#subtract"/></svg><svg><use href="#intersect"/></svg><hr><svg><use href="#slice"/></svg><svg><use href="#convert"/></svg></div>
        </div>

        <div class="sect">
          <svg class="big"><use href="#compass"/></svg>
          <div class="row"><svg><use href="#pan"/></svg><svg><use href="#zoom"/></svg><hr><svg><use href="#orbit"/></svg><svg><use href="#swivel"/></svg><svg><use href="#walk"/></svg><hr><svg><use href="#camera"/></svg><hr><svg class="hot"><use href="#parallel"/></svg><svg><use href="#persp"/></svg></div>
          <div class="row"><svg class="lead"><use href="#back"/></svg><div class="combo">Текущий вид не сохранен<u></u></div></div>
        </div>

        <div class="sect">
          <svg class="big"><use href="#shapes"/></svg>
          <div class="row"><svg><use href="#line"/></svg><svg><use href="#xline"/></svg><svg><use href="#pline"/></svg><svg><use href="#polygon"/></svg><svg><use href="#rect"/></svg><svg><use href="#arc"/></svg><svg><use href="#circle"/></svg><svg><use href="#cloud"/></svg><svg><use href="#spline"/></svg><svg><use href="#ellipse"/></svg><svg><use href="#earc"/></svg><svg><use href="#insblock"/></svg><em></em></div>
          <div class="row"><svg><use href="#erase"/></svg><svg><use href="#copyobj"/></svg><svg><use href="#mirror"/></svg><svg><use href="#offset"/></svg><svg><use href="#array"/></svg><svg><use href="#move"/></svg><svg><use href="#rotate"/></svg><svg><use href="#scale"/></svg><svg><use href="#stretch"/></svg><svg><use href="#trim"/></svg><svg><use href="#extend"/></svg><svg><use href="#break"/></svg><em></em></div>
        </div>

        <div class="sect">
          <div class="big letter">A</div>
          <div class="row"><svg><use href="#textA"/></svg><svg><use href="#mtext"/></svg><hr><svg><use href="#find"/></svg><svg><use href="#spell"/></svg></div>
          <div class="row"><div class="combo off pad">20<u></u></div><svg><use href="#style"/></svg></div>
          <div class="row"><div class="combo">3.5<u></u></div></div>
        </div>

        <div class="sect">
          <svg class="big"><use href="#bigdim"/></svg>
          <div class="row"><svg><use href="#qdim"/></svg><hr><svg><use href="#dimlin"/></svg><svg><use href="#dimal"/></svg><svg><use href="#dimarc"/></svg><svg><use href="#dimord"/></svg><hr><svg><use href="#dimrad"/></svg><svg><use href="#dimjog"/></svg><svg><use href="#dimjogl"/></svg><svg><use href="#dimdia"/></svg><svg><use href="#dimang"/></svg><hr><svg><use href="#qdim2"/></svg><svg><use href="#dimcont"/></svg><em></em></div>
          <div class="row"><div class="combo off"><u></u></div><svg><use href="#dimstyle"/></svg></div>
        </div>

        <div class="sect">
          <svg class="big"><use href="#bigleader"/></svg>
          <div class="row"><svg><use href="#leader"/></svg><hr><svg><use href="#leadadd"/></svg><svg><use href="#leaddel"/></svg><hr><svg><use href="#leadalign"/></svg><svg><use href="#leadcol"/></svg></div>
          <div class="row"><div class="combo off"><u></u></div><svg><use href="#leadstyle"/></svg></div>
        </div>

        <div class="sect">
          <svg class="big"><use href="#compass"/></svg>
          <div class="row"><svg><use href="#pan"/></svg><svg><use href="#zoom"/></svg><hr><svg><use href="#zoomwin"/></svg><svg><use href="#zoomext"/></svg></div>
          <div class="row"><svg class="lead"><use href="#back"/></svg><div class="combo off"><u></u></div></div>
        </div>

        <div class="sect">
          <svg class="big"><use href="#bigprops"/></svg>
          <div class="row"><svg class="lead"><use href="#wheel"/></svg><div class="combo off"><s></s>Послою<u></u></div></div>
          <div class="row"><svg class="lead"><use href="#ltype"/></svg><div class="combo off"><i style="width:60px"></i>Послою<u></u></div></div>
          <div class="row"><svg class="lead"><use href="#lweight"/></svg><div class="combo off"><i style="width:35px"></i>Послою<u></u></div></div>
          <div class="row"><svg class="lead"><use href="#pstyle"/></svg><div class="combo off ind">Поцвету<u></u></div></div>
        </div>

        <div class="sect last">
          <svg class="big"><use href="#bigballs"/></svg>
          <div class="row"><svg><use href="#glass"/></svg><svg><use href="#darkball"/></svg><svg><use href="#rgbbox"/></svg><hr><svg><use href="#balltool"/></svg><svg><use href="#ballsheet"/></svg></div>
          <div class="row"><div class="combo off"><u></u></div></div>
        </div>
      </div>
    </div>

    <div class="statusbar">
      <div class="coords">31631.6622, -15875.6731, 0.0000</div>
      <span style="width:25px">ШАГ</span><span style="width:39px">СЕТКА</span><span style="width:34px">ОРТО</span><span class="on" style="width:68px">ОТС-ПОЛЯР</span><span class="on" style="width:63px">ПРИВЯЗКА</span><span class="on" style="width:73px">ОТС-ОБЪЕКТ</span><span class="on" style="width:35px">ДПСК</span><span class="on" style="width:29px">ДИН</span><span class="on" style="width:25px">ВЕС</span><span class="on" style="width:52px">МОДЕЛЬ</span>
      <div class="tray">
        <label>Масштаб аннотаций:</label><label>1:1</label>
        <svg width="160" height="20"><path d="M22 14l5-9 5 9zM48 14l5-9 5 9z" fill="none" stroke="#58799c" stroke-width="2"/><path d="M73 6h12v10H73z" fill="#e0b422" stroke="#333"/><path d="M99 5h9v11h-9z" fill="#fff" stroke="#456"/><path d="M101 8h5M101 11h5" stroke="#456"/><circle cx="122" cy="10" r="6" fill="#3c9b46"/><path d="M119 10l2 3 5-6" fill="none" stroke="#fff" stroke-width="2"/><path d="M136 10h8l-4 5z"/></svg>
        <svg width="16" height="18"><path d="M1 1h14v14H1z" fill="#d8e4f0" stroke="#1f3d5c" stroke-width="2"/></svg>
      </div>
    </div>
    <div class="taskbar"><b></b><i></i></div>
  </div>

  <!-- Text formatting window -->
  <div class="textfmt">
    <div class="tf-title">Формат текста</div>
    <div class="tf-row">
      <div class="combo" style="width:109px;padding-left:21px;margin-left:1px">20<u></u></div>
      <div class="combo" style="width:148px;margin-left:2px;padding-left:4px"><svg><use href="#tt"/></svg>Times New Roman<u></u></div>
      <span class="glyph outline" style="width:25px">A</span>
      <div class="combo" style="width:63px;padding-left:2px">20<u></u></div>
      <span class="glyph pressed">Ж</span><span class="glyph ital">К</span><span class="glyph under">Ч</span><span class="glyph over">Н</span>
      <svg class="navy"><use href="#curl-l"/></svg><svg><use href="#curl-r"/></svg><svg><use href="#stack"/></svg>
      <div class="combo" style="width:39px;padding-left:4px;margin-left:1px"><s></s><u></u></div>
      <hr><span class="pressed glyph" style="margin-left:5px"><svg><use href="#ruler"/></svg></span><hr>
      <span class="ok">OK</span><hr><svg style="width:33px"><use href="#options"/></svg>
    </div>
    <div class="tf-row second">
      <svg><use href="#columns"/></svg><em class="gray"></em><hr>
      <svg class="gap"><use href="#mjust"/></svg><em></em><hr>
      <svg class="gap"><use href="#para"/></svg><hr>
      <svg style="margin-left:3px"><use href="#j-left"/></svg><svg style="margin-left:1px"><use href="#j-center"/></svg><svg><use href="#j-right"/></svg><svg><use href="#j-just"/></svg><svg><use href="#j-dist"/></svg><hr>
      <svg class="gap"><use href="#spacing"/></svg><em></em><hr>
      <svg class="gap"><use href="#numlist"/></svg><em></em><hr>
      <svg class="gap"><use href="#field"/></svg><hr>
      <span class="case" style="margin-left:4px">ӓA</span><span class="case">Aӓ</span><hr>
      <span class="at">@</span><em></em><hr>
      <span class="lbl obl">У/</span><div class="num">15.0000</div><div class="spin"><b></b><b></b></div><hr>
      <span class="lbl ab">a+b</span><div class="num">1.0000</div><div class="spin"><b></b><b></b></div><hr>
      <svg style="width:20px;margin-left:5px"><use href="#oval"/></svg><div class="num">0.9000</div><div class="spin"><b></b><b></b></div>
    </div>
  </div>

  <!-- Clock and calendar popup -->
  <div class="popup">
    <div class="popup-body">
      <div class="today">14 апреля 2022 г.</div>
      <div class="cal-wrap">
        <div class="cal">
          <div class="month"><svg width="5" height="8"><path d="M5 0v8L0 4z"/></svg><span>Апрель 2022</span><svg width="5" height="8"><path d="M0 0v8l5-4z"/></svg></div>
          <div class="days names"><span>Пн</span><span>Вт</span><span>Ср</span><span>Чт</span><span>Пт</span><span>Сб</span><span>Вс</span></div>
          <div class="days">
            <span class="o">28</span><span class="o">29</span><span class="o">30</span><span class="o">31</span><span>1</span><span>2</span><span>3</span>
            <span>4</span><span>5</span><span>6</span><span>7</span><span>8</span><span>9</span><span>10</span>
            <span>11</span><span>12</span><span>13</span><span class="cur">14</span><span>15</span><span>16</span><span>17</span>
            <span>18</span><span>19</span><span>20</span><span>21</span><span>22</span><span>23</span><span>24</span>
            <span>25</span><span>26</span><span>27</span><span>28</span><span>29</span><span>30</span><span class="o">1</span>
            <span class="o">2</span><span class="o">3</span><span class="o">4</span><span class="o">5</span><span class="o">6</span><span class="o">7</span><span class="o">8</span>
          </div>
        </div>
        <div class="clock">
          <svg width="128" height="128" viewBox="-64 -64 128 128">
            <defs><linearGradient id="face" x1="0" y1="0" x2="1" y2="1"><stop offset="0" stop-color="#dde3e8"/><stop offset=".5" stop-color="#f3f7f8"/><stop offset="1" stop-color="#dfe8ea"/></linearGradient></defs>
            <circle r="60.500" fill="url(#face)" stroke="#8c8f9d" stroke-width="3"/>
            <circle r="58.500" fill="none" stroke="#d9dae2" stroke-width="2"/>
            <circle r="56.500" fill="none" stroke="#aeb3bf" stroke-width="1"/>
            <path d="M-46 26Q-20-18 42-17Q54 5 32 38Q0 58-34 39z" fill="#ccd6d9" opacity=".45"/>
            <circle r="51" fill="none" stroke="#9fb0b4" stroke-width="2.500" stroke-dasharray="1 4.341"/>
            <circle r="49" fill="none" stroke="#4d6670" stroke-width="8" stroke-dasharray="2 23.656" stroke-dashoffset="1"/>
            <path d="M0 0L-26-23" stroke="#5c7079" stroke-width="2"/>
            <path d="M0 0L-9 45" stroke="#4d6269" stroke-width="2"/>
            <path d="M-17 7L42-19" stroke="#4d6269"/>
            <circle r="2.800" fill="#33525c"/>
          </svg>
          <div class="time">10:32:11</div>
          <div class="dow">четверг</div>
        </div>
      </div>
      <div class="foot">Изменение настроек даты и времени...</div>
    </div>
  </div>
</body>
</html>
```
FILE: styles.css
```css
* { box-sizing: border-box; margin: 0; padding: 0; }
body {
  width: 1918px;
  height: 1053px;
  overflow: hidden;
  background: #f0f0f0;
  font-family: "Open Sans", "Noto Sans", sans-serif;
  font-size: 12px;
  letter-spacing: -0.3px;
  color: #000;
  position: relative;
}
svg { display: block; flex: none; }
.sprite { position: absolute; }
s, u, em, i { text-decoration: none; font-style: normal; }
.app { display: flex; flex-direction: column; height: 1053px; }

/* title bar */
.titlebar {
  height: 21px;
  display: flex;
  align-items: center;
  background: linear-gradient(90deg, #8e969e 0, #a9afb5 300px, #8b9299 430px, #3a444e 455px, #1b2631 480px, #1c2731 1590px, #3b4d61 1600px, #3b4d61 1700px, #0d1116 1720px, #0d1116 1780px, #2b3239);
  border-bottom: 1px solid #1b1f24;
  overflow: hidden;
  position: relative;
}
.app-icon { width: 16px; height: 17px; margin-top: 2px; }
.title { width: 438px; padding-left: 5px; white-space: nowrap; letter-spacing: -0.21px; text-shadow: 0 0 6px #fff, 0 0 6px #fff; line-height: 18px; padding-top: 3px; }
.glass-tabs { display: flex; padding: 4px 0 0 8px; filter: blur(3px); }
.glass-tabs i { width: 126px; height: 14px; position: relative; }
.glass-tabs i::before { content: ""; position: absolute; left: 0; top: 1px; width: 14px; height: 14px; border-radius: 6px; background: #5aa7ef; }
.glass-tabs i::after { content: ""; position: absolute; left: 24px; top: 5px; width: 56px; height: 6px; background: #6c7883; }
.glass-tabs .yellow::before { background: linear-gradient(#d84a3a 40%, #f0c050 40%); }
.glass-tabs .green::before { background: #43c78f; }
.glass-tabs .rose::before { background: #d9a0a6; }
.glass-tabs .pink::before { background: #d3607c; }
.glass-tabs .red::before { background: #a32a3a; }
.glass-glow { width: 34px; height: 18px; margin-left: 45px; background: #a9dcf5; filter: blur(5px); }
.win-buttons { position: absolute; right: 0; top: -2px; display: flex; height: 20px; border: 1px solid #888f96; border-radius: 0 0 4px 4px; width: 104px; background: rgba(90, 98, 106, 0.6); }
.win-buttons span { width: 28px; display: flex; justify-content: center; align-items: center; border-right: 1px solid #888f96; }
.win-buttons span:last-child { flex: 1; border: 0; }

/* menu */
.menubar { height: 20px; display: flex; align-items: center; background: linear-gradient(#fff 0, #eef1fa 35%, #d5dcee 40%, #dfe5f3); border-bottom: 1px solid #a3a6ad; color: #6d6d6d; letter-spacing: -0.35px; }
.doc-icon { width: 16px; height: 17px; margin: 0 6px 0 8px; }
.menubar > span { white-space: nowrap; padding-top: 2px; }
.infocenter { margin-left: auto; display: flex; align-items: center; height: 18px; }
.ask { width: 268px; height: 19px; line-height: 20px; background: #f0f0f0; border-left: 1px solid #aaa; padding-left: 3px; }
.info-buttons { display: flex; width: 65px; height: 19px; border: 1px solid #999; border-radius: 4px; background: #f7f7f7; }
.info-buttons span { width: 17px; border-left: 1px solid #aaa; overflow: hidden; }
.info-buttons .wide { width: 28px; border: 0; }
.mdi { width: 18px; height: 18px; border: 1px solid #a8bccd; background: #dce8f2; margin-left: 1.500px; }

/* toolbars */
.toolbars { height: 30px; display: flex; background: #f0f0f0; border-bottom: 1px solid #808080; box-shadow: inset 0 -2px 0 #f7f7f7; }
.toolbar { display: flex; align-items: center; height: 28px; padding-top: 4px; border-right: 1px solid #9f9f9f; }
.toolbar > svg { width: 23px; height: 17px; filter: grayscale(1); }
.toolbar > svg.dim { color: #b9b9b9; }
.toolbar hr, .row hr, .tf-row hr { border: 0; flex: none; }
.toolbar hr { width: 1px; height: 22px; margin: 0 3px 0 2px; background: #444; }
.toolbar em { width: 12px; height: 3px; border: 4px solid transparent; border-top: 3px solid #aaa; border-bottom: 0; background-clip: padding-box; clip-path: polygon(0 0, 70% 0, 35% 100%); }
.grip { flex: none; width: 6px; height: 24px; margin: 0 5px 0 3px; border: 1px solid #a5a5a5; border-width: 0 1px; background: #fff; background-clip: content-box; }
.workspace { width: 238px; }
.workspace .combo { width: 174px; padding-left: 6px; }
.standard { width: 655px; }
.standard .grip, .layer-bar .grip { margin-left: 4px; margin-right: 4px; }
.layer-bar { width: 410px; }
.layer-bar > .combo { flex: none; width: 299px; margin: 0 -2px 0 1px; }

.combo {
  display: flex;
  align-items: center;
  height: 22px;
  padding-left: 3px;
  background: #fff;
  border: 1px solid #e0e3e6;
  white-space: nowrap;
  color: #000;
}
.combo u { margin-left: auto; width: 17px; height: 100%; display: flex; align-items: center; justify-content: center; }
.combo u::after { content: ""; border: 4px solid transparent; border-top-color: #000; border-bottom: 0; }
.combo.off { background: #efefef; border: 1px solid #a9a9a9; box-shadow: inset 0 0 0 1px #fff; color: #6f6f6f; font-family: "Liberation Sans", sans-serif; }
.combo.off u { background: #fff; }
.combo.off u::after { border-top-color: #a0a0a0; }
.combo s { width: 11px; height: 11px; background: #f00; border: 1px solid #300; margin-right: 4px; }
.combo.off i { height: 1px; background: #000; margin-right: 5px; margin-left: 1px; }
.layer-combo svg { width: 16px; height: 15px; }
.layer-combo svg:nth-child(4) { margin-right: 2px; }

/* work area */
.workarea { display: flex; height: 955px; background: #f0f0f0; }
.left { width: 1572px; }
.main-row { display: flex; height: 869px; padding-top: 1px; }
.side-palette { width: 23px; background: #b9cadb; border-right: 4px solid #747c84; display: flex; flex-direction: column; align-items: center; padding-top: 3px; height: 866px; border-bottom: 2px solid #7f8890; }
.side-palette svg:nth-child(2) { margin-top: 3px; }
.side-label { margin-top: auto; writing-mode: vertical-rl; transform: rotate(180deg); color: #44586c; font-size: 12px; letter-spacing: -0.15px; margin-bottom: 13px; width: 17px; line-height: 17px; }
.side-palette svg:last-child { margin: 6px 0 3px; }
.canvas { background: #000; }
.mtext { font: italic bold 146px "Liberation Serif", serif; fill: #f00; letter-spacing: 0; }
.cadtext text { font: italic 100 132px Inter, Roboto, sans-serif; fill: #f01414; stroke: #000; stroke-width: 0.9px; letter-spacing: 0; }
.axis { font: 200 27px Inter, sans-serif; fill: #fff; text-anchor: middle; letter-spacing: 0; }

.tabs { display: flex; height: 18px; background: #f0f0f0; border-top: 1px solid #8a8a8a; font-size: 11px; letter-spacing: -0.25px; }
.tab { width: 49px; height: 17px; line-height: 17px; text-align: center; position: relative; z-index: 0; }
.tab::before { content: ""; position: absolute; inset: 0 2px; border-right: 1px solid #555; border-bottom: 1px solid #555; transform: skewX(-18deg); z-index: -1; }
.tab.first { width: 47px; }
.tab.on { width: 60px; color: #fff; }
.tab.on::before { inset: 0 0 0 2px; background: #000; transform: none; clip-path: polygon(0 0, 100% 0, 92% 100%, 8% 100%); }

.command { display: flex; height: 65px; border-top: 2px solid #777; margin-top: 5px; padding-top: 9px; }
.command .grip { height: 47px; margin: 0 3px 0 7px; }
.cmd-box { width: 1551px; height: 52px; border: 1px solid #777; border-width: 2px 0 0 2px; background: #fff; font: 13.3px "Liberation Mono", monospace; letter-spacing: -0.06px; }
.cmd-history { height: 30px; display: flex; justify-content: space-between; border-bottom: 1px solid #999; line-height: 18px; }
.cmd-line { height: 20px; display: flex; justify-content: space-between; line-height: 22px; }
.vscroll { width: 16px; background: #ededed; }
.hscroll { width: 69px; height: 17px; background: #ededed; margin: 1px 18px 0 0; }

/* dashboard */
.dashboard { width: 339px; margin-left: 7px; border-left: 2px solid #777; background: #ececec; padding-left: 2px; overflow: hidden; }
.dash-head { height: 19px; display: flex; align-items: center; padding: 3px 5px 0 6px; }
.dash-head b { flex: 1; height: 7px; margin: 0 4px; border: 1px solid #999; border-width: 1px 0; background: #f8f8f8; }
.sect { border-top: 1px solid #9c9c9c; padding: 3px 3px 3px 0; position: relative; background: linear-gradient(90deg, #d8d8d8 22px, #ececec 22px); }
.big { position: absolute; left: 4px; top: 5px; width: 22px; height: 22px; }
.letter { font: bold 25px/22px "Liberation Sans", sans-serif; color: #6487b3; text-align: center; }
.row { height: 25px; display: flex; align-items: center; justify-content: flex-end; padding-left: 31px; }
.row > svg { width: 22px; height: 17px; }
.row > .lead { height: 16px; }
.row hr { width: 1px; height: 22px; margin: 0 1px; background: #555; }
.row em { width: 7px; height: 7px; border-top: 1px solid #000; align-self: flex-end; position: relative; }
.row em::after { content: ""; position: absolute; left: 0; top: 2px; border: 3.500px solid transparent; border-top-color: #000; border-bottom: 0; }
.row .combo { width: 279px; }
.row .combo:not(:last-child) { width: 257px; }
.row .combo.pad { padding-left: 18px; }
.row .combo.ind { padding-left: 9px; }
.row .combo > s { margin-left: 2px; }
.row .layer-combo > s { margin-left: 0; }
.row svg.hot { background: linear-gradient(#fcd9a2, #f7ad4f); height: 22px; padding: 3px 0; }
.last { height: 330px; }

/* status bar */
.statusbar { height: 24px; display: flex; align-items: center; background: #f0eeec; border-top: 1px solid #888; box-shadow: inset 0 2px 0 #fff, inset 0 3px 0 #999; padding: 4px 0 0 5px; font: 11px "Liberation Sans", sans-serif; letter-spacing: -0.3px; }
.coords { width: 174px; height: 18px; border: 1px solid #999; border-right-color: #ccc; color: #9a9a9a; font-size: 12px; line-height: 18px; padding-left: 2px; margin-right: 5px; white-space: nowrap; letter-spacing: -0.55px; }
.statusbar span { flex: none; height: 18px; line-height: 18px; text-align: center; border: 1px solid #fff; border-right-color: #aaa; border-bottom-color: #aaa; margin-right: 4px; white-space: nowrap; }
.statusbar span.on { border-color: #222 #fff #fff #222; line-height: 20px; }
.tray { margin-left: auto; display: flex; align-items: center; gap: 9px; padding-right: 3px; }
.taskbar { height: 3px; background: #26323c; display: flex; }
.taskbar b { width: 158px; margin-left: 152px; background: #e0685c; }
.taskbar i { width: 320px; background: #8d9297; }

/* text formatting window */
.textfmt { position: absolute; left: 452px; top: 210px; width: 753px; height: 98px; padding: 8px; background: #f7f8fb; border-right: 2px solid #888; border-bottom: 2px solid #777; }
.tf-title { height: 17px; width: 737px; background: #99b4d1; padding: 8px 0 0 2px; line-height: 16px; overflow: hidden; letter-spacing: -0.1px; }
.tf-row { display: flex; align-items: center; height: 31px; width: 737px; background: #f0f0f0; border-bottom: 1px solid #a0a0a0; padding-bottom: 5px; }
.tf-row > * { flex: none; }
.tf-row.second { border: 0; height: 32px; padding-bottom: 0; }
.tf-row > svg { width: 24px; height: 16px; }
.tf-row > svg.gap { margin-left: 5px; }
.tf-row .combo { height: 21px; }
.tf-row .combo svg { width: 15px; height: 14px; margin-right: 1px; }
.tf-row u { width: 16px; }
.tf-row .combo s { margin: 0; }
.tf-row hr { width: 1px; height: 18px; background: #888; margin: 0 2px 0 3px; }
.tf-row em { width: 8px; height: 4px; margin: 0 2px 0 -2px; background: #222; clip-path: polygon(0 0, 100% 0, 50% 100%); }
.tf-row em.gray { background: #888; }
.glyph { width: 24px; height: 20px; line-height: 20px; text-align: center; font-family: "Liberation Serif", serif; font-weight: bold; font-size: 15px; color: #4a7390; display: flex; justify-content: center; align-items: center; }
.glyph svg { width: 17px; height: 16px; }
.pressed { border: 1px solid #444; border-radius: 3px; background: #dadada; }
.ital { font-style: italic; }
.under { text-decoration: underline; text-decoration-color: #111; }
.over { text-decoration: overline; text-decoration-color: #111; color: #24557f; }
.outline { font-family: "Liberation Sans"; font-size: 14px; color: #dce8f4; -webkit-text-stroke: 1px #4d7ba8; }
.navy { color: #0a0a80; }
.ok { width: 33px; text-align: center; font-size: 13px; }
.case { width: 24px; text-align: center; font: 12px Roboto, sans-serif; }
.at { width: 24px; margin-left: 4px; text-align: center; font: bold 17px/18px "Liberation Sans", sans-serif; color: #2c5f8a; }
.lbl { text-align: center; }
.obl { width: 20px; font: 17px "Liberation Serif", serif; margin-left: 4px; color: #2a3d50; }
.ab { width: 20px; font: bold 11px "Liberation Sans", sans-serif; letter-spacing: -0.6px; margin-left: 5px; }
.num { width: 43px; height: 20px; border: 1px solid #777; border-right-color: #ddd; border-bottom-color: #ddd; background: #fff; padding-left: 1px; line-height: 17px; overflow: hidden; letter-spacing: -0.45px; }
.spin { width: 15px; height: 18px; margin-left: 3px; display: flex; flex-direction: column; }
.spin b { flex: 1; border: 1px solid #aaa; display: flex; align-items: center; justify-content: center; }
.spin b::after { content: ""; border: 2.500px solid transparent; border-bottom: 3px solid #5b67b5; border-top: 0; }
.spin b:last-child::after { transform: rotate(180deg); }

/* calendar popup */
.popup { position: absolute; left: 1574px; top: 760px; width: 338px; height: 281px; padding: 7px; border: 1px solid #2e3f52; border-radius: 7px; background: linear-gradient(#a9c8e8 0, #c3dcf3 70px, #8fb0d2 73px, #aecbe8 100%); box-shadow: inset 0 0 0 1px #e8f3fc, 0 1px 8px 3px rgba(0, 0, 0, 0.6); }
.popup-body { height: 100%; background: #fff; border: 1px solid #4d6378; display: flex; flex-direction: column; }
.today { text-align: center; color: #1464bd; padding-top: 13px; height: 68px; line-height: 16px; letter-spacing: -0.2px; }
.cal-wrap { display: flex; height: 155px; }
.cal { width: 172px; padding-left: 9px; margin-top: -10px; }
.month { display: flex; align-items: center; justify-content: space-between; height: 16px; margin: 0 9px 0 9px; }
.days { display: grid; grid-template-columns: repeat(7, 22px); width: 154px; grid-auto-rows: 15px; margin-left: 3px; }
.days span { text-align: right; line-height: 15px; margin-right: 2px; }
.days.names { height: 22px; padding-top: 7px; border-bottom: 1px solid #eee; margin-bottom: 1px; }
.days.names span { margin-right: 0; text-align: center; }
.days .o { color: #6d6d6d; }
.days .cur { margin-right: -2px; padding-right: 3px; border: 1px dotted #001; outline: 1px solid #1b6fc5; outline-offset: -1px; line-height: 13px; background: #e0effb; color: #1464bd; border-radius: 2px; }
.clock { width: 128px; margin: -26px 0 0 5px; text-align: center; }
.clock .time { margin-top: 7px; line-height: 16px; }
.clock .dow { margin-top: 5px; line-height: 16px; color: #555; letter-spacing: -0.2px; }
.foot { flex: 1; background: #f0f4fb; border-top: 1px solid #ccd6e4; display: flex; align-items: center; justify-content: center; color: #1464bd; letter-spacing: -0.42px; }
```
